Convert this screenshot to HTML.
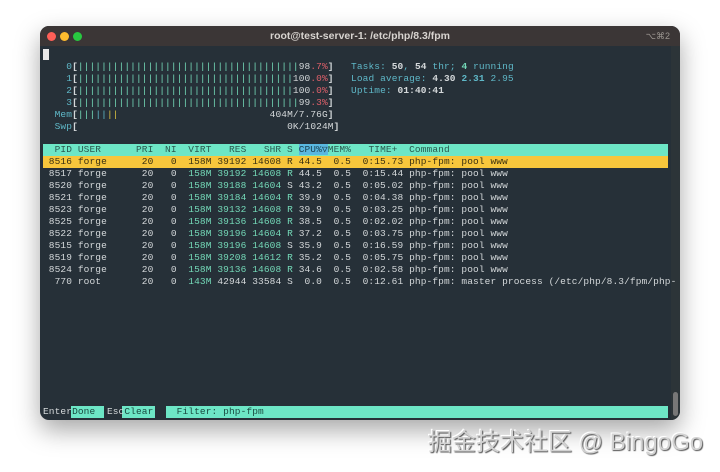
<!DOCTYPE html>
<html><head><style>
body{margin:0;width:720px;height:472px;background:#fff;position:relative;overflow:hidden;font-family:"Liberation Sans",sans-serif}
.win{position:absolute;left:40px;top:26px;width:640px;height:394px;border-radius:9px;background:#263038;overflow:hidden;box-shadow:0 10px 25px rgba(0,0,0,.35)}
.tb{height:20px;background:#3b3636;position:relative;color:#d8d4d0;font-size:10.5px;text-align:center;line-height:20px;font-weight:bold}
.d{position:absolute;top:6px;width:9px;height:9px;border-radius:50%}
.t{position:absolute;left:3px;font-family:"Liberation Mono",monospace;font-size:9.5px;letter-spacing:0.11px;line-height:12px;white-space:pre;color:#d4d8da}
.c{color:#5fb8c8}.g{color:#74d9b8}.r{color:#e0606a}.y{color:#d8c040}.w{color:#d4d8da}.b{font-weight:bold}
.sb{position:absolute;right:0;top:20px;width:9px;height:374px;background:#2c3438}
</style></head><body>
<div class="win">
<div class="tb"><span class="d" style="left:7px;background:#fe5f57"></span><span class="d" style="left:20px;background:#febc2e"></span><span class="d" style="left:33px;background:#28c840"></span>root@test-server-1: /etc/php/8.3/fpm<span style="position:absolute;right:10px;font-weight:normal;color:#9a9590;font-size:9px">⌥⌘2</span></div>
<div class="sb"><div style="position:absolute;left:2px;top:346px;width:5px;height:24px;background:#777;border-radius:3px"></div></div>
<div style="position:absolute;left:3px;top:23px;width:6px;height:11px;background:#e8e8e8"></div>
<div class="t" style="top:35px"><span class="c">    0</span><span class="w b">[</span><span class="g">||||||||||||||||||||||||||||||||||||||</span><span class="w">98</span><span class="r">.7%</span><span class="w b">]</span>   <span class="c">Tasks: </span><span class="b">50</span><span class="c">, </span><span class="b">54</span><span class="c"> thr; </span><span class="b g">4</span><span class="c"> running</span>
<span class="c">    1</span><span class="w b">[</span><span class="g">|||||||||||||||||||||||||||||||||||||</span><span class="w">100</span><span class="r">.0%</span><span class="w b">]</span>   <span class="c">Load average: </span><span class="b">4.30 </span><span class="c b">2.31 </span><span class="c">2.95</span>
<span class="c">    2</span><span class="w b">[</span><span class="g">|||||||||||||||||||||||||||||||||||||</span><span class="w">100</span><span class="r">.0%</span><span class="w b">]</span>   <span class="c">Uptime: </span><span class="b">01:40:41</span>
<span class="c">    3</span><span class="w b">[</span><span class="g">||||||||||||||||||||||||||||||||||||||</span><span class="w">99</span><span class="r">.3%</span><span class="w b">]</span>
<span class="c">  Mem</span><span class="w b">[</span><span class="g">|||</span><span class="c">||</span><span class="y">||</span>                          <span class="w">404M/7.76G</span><span class="w b">]</span>
<span class="c">  Swp</span><span class="w b">[</span>                                    <span class="w">0K/1024M</span><span class="w b">]</span></div>
<div style="position:absolute;left:3px;top:118px;width:625px;height:12px;background:#6de6c6"></div>
<div style="position:absolute;left:3px;top:130px;width:625px;height:12px;background:#f7c63c"></div>
<div class="t" style="top:118px"><span style="color:#2a5a50">  PID USER      PRI  NI  VIRT   RES   SHR S </span><span style="background:#5ab8e0;color:#1a4050">CPU%▽</span><span style="color:#2a5a50">MEM%   TIME+  Command</span>
<span style="color:#3a3010"> 8516 forge      20   0  158M 39192 14608 R 44.5  0.5  0:15.73 php-fpm: pool www</span>
 8517 forge      20   0  <span class="g">158M 39192 14608 R</span> 44.5  0.5  0:15.44 php-fpm: pool www
 8520 forge      20   0  <span class="g">158M 39188 14604</span> S 43.2  0.5  0:05.02 php-fpm: pool www
 8521 forge      20   0  <span class="g">158M 39184 14604 R</span> 39.9  0.5  0:04.38 php-fpm: pool www
 8523 forge      20   0  <span class="g">158M 39132 14608 R</span> 39.9  0.5  0:03.25 php-fpm: pool www
 8525 forge      20   0  <span class="g">158M 39136 14608 R</span> 38.5  0.5  0:02.02 php-fpm: pool www
 8522 forge      20   0  <span class="g">158M 39196 14604 R</span> 37.2  0.5  0:03.75 php-fpm: pool www
 8515 forge      20   0  <span class="g">158M 39196 14608</span> S 35.9  0.5  0:16.59 php-fpm: pool www
 8519 forge      20   0  <span class="g">158M 39208 14612 R</span> 35.2  0.5  0:05.75 php-fpm: pool www
 8524 forge      20   0  <span class="g">158M 39136 14608 R</span> 34.6  0.5  0:02.58 php-fpm: pool www
  770 root       20   0  <span class="g">143M</span> 42944 33584 S  0.0  0.5  0:12.61 php-fpm: master process (/etc/php/8.3/fpm/php-</div>
<div style="position:absolute;left:31px;top:380px;width:33px;height:12px;background:#6de6c6"></div>
<div style="position:absolute;left:82px;top:380px;width:33px;height:12px;background:#6de6c6"></div>
<div style="position:absolute;left:126px;top:380px;width:502px;height:12px;background:#6de6c6"></div>
<div class="t" style="top:380px"><span class="w">Enter</span><span style="color:#1a4a40">Done  </span><span class="w">Esc</span><span style="color:#1a4a40">Clear    Filter: php-fpm</span></div>
</div>
<div style="position:absolute;left:428px;top:422px;font-family:'Liberation Sans','Noto Sans CJK SC',sans-serif;font-size:24px;color:#d2d2d2;text-shadow:1px 1px 1px #555,-1px -1px 0 #fff">掘金技术社区 @ BingoGo</div>
</body></html>
